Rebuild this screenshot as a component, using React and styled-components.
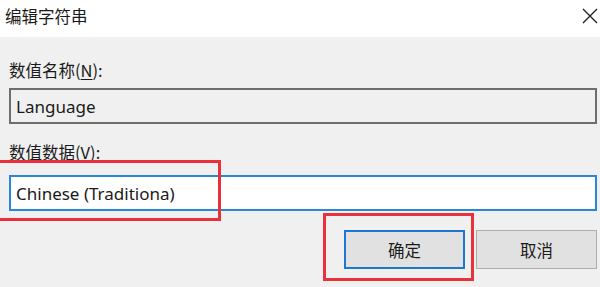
import React from 'react'
import styled, { createGlobalStyle } from 'styled-components'

const GlobalStyle = createGlobalStyle`
  html, body {
    margin: 0;
    padding: 0;
    background: #f0f0f0;
  }
  body {
    font-family: "Noto Sans", "Noto Sans CJK SC", sans-serif;
    color: #111;
  }
`

const Dialog = styled.div`
  width: 600px;
  height: 287px;
  overflow: hidden;
  display: flex;
  flex-direction: column;
`

const TitleBar = styled.div`
  height: 37px;
  flex-shrink: 0;
  background: #fff;
  display: flex;
  align-items: center;
  justify-content: space-between;
  padding: 0 0 5px 5px;
  box-sizing: border-box;
`

const Title = styled.span`
  font-family: "Noto Sans CJK SC", sans-serif;
  font-size: 16.5px;
  color: #1a1a1a;
`

const CloseButton = styled.button`
  width: 20px;
  height: 20px;
  border: 0;
  background: none;
  padding: 0;
  display: flex;
  align-items: center;
  justify-content: center;
`

const Body = styled.div`
  flex: 1;
  background: #f0f0f0;
  padding: 0 3px 0 9px;
  display: flex;
  flex-direction: column;
`

const Label = styled.div`
  font-family: "Noto Sans CJK SC", sans-serif;
  font-size: 16.5px;
  line-height: 20px;
  color: #1a1a1a;
  margin-top: ${p => p.$top}px;

  u {
    text-decoration-thickness: 1px;
    text-underline-offset: 2px;
  }
`

const FieldWrap = styled.div`
  position: relative;
  margin-top: ${p => p.$top}px;
`

const Field = styled.div`
  height: 36px;
  box-sizing: border-box;
  display: flex;
  align-items: center;
  padding-left: 5px;
  font-family: "Noto Sans", sans-serif;
  font-size: 17px;
  color: #1a1a1a;
  border: 2px solid ${p => (p.$active ? '#2a86d6' : '#6d6d6d')};
  background: ${p => (p.$active ? '#fff' : '#f0f0f0')};
`

const Highlight = styled.div`
  position: absolute;
  border: 3.5px solid #e8313a;
  pointer-events: none;
  top: ${p => p.$t}px;
  left: ${p => p.$l}px;
  right: ${p => p.$r}px;
  bottom: ${p => p.$b}px;
`

const ButtonRow = styled.div`
  display: flex;
  justify-content: flex-end;
  gap: 11px;
  margin-top: 19px;
`

const ButtonWrap = styled.div`
  position: relative;
`

const Button = styled.button`
  width: 121px;
  height: 39px;
  box-sizing: border-box;
  background: #e1e1e1;
  border: ${p => (p.$primary ? '2.5px solid #1a78d0' : '1.5px solid #adadad')};
  font-family: "Noto Sans CJK SC", sans-serif;
  font-size: 16.5px;
  color: #1a1a1a;
  padding: 0;
`

export default function App() {
  return (
    <>
      <GlobalStyle />
      <Dialog>
        <TitleBar>
          <Title>编辑字符串</Title>
          <CloseButton aria-label="关闭">
            <svg width="16" height="16" viewBox="0 0 16 16">
              <path d="M1 1 L15 15 M15 1 L1 15" stroke="#222" strokeWidth="1.4" fill="none" />
            </svg>
          </CloseButton>
        </TitleBar>
        <Body>
          <Label $top={23}>数值名称(<u>N</u>):</Label>
          <FieldWrap $top={8}>
            <Field>Language</Field>
          </FieldWrap>
          <Label $top={18}>数值数据(<u>V</u>):</Label>
          <FieldWrap $top={13}>
            <Field $active>Chinese (Traditiona)</Field>
            <Highlight $t={-15} $l={-14} $r={376} $b={-10} />
          </FieldWrap>
          <ButtonRow>
            <ButtonWrap>
              <Button $primary>确定</Button>
              <Highlight $t={-17} $l={-21} $r={-9} $b={-12} />
            </ButtonWrap>
            <Button>取消</Button>
          </ButtonRow>
        </Body>
      </Dialog>
    </>
  )
}
